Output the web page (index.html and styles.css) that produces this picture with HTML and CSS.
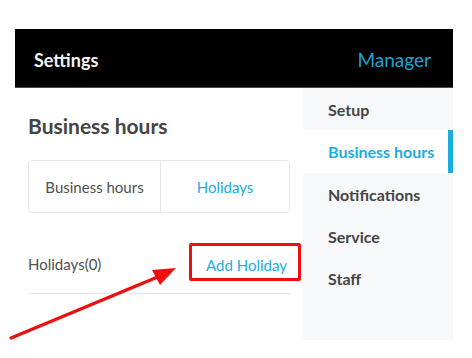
FILE: index.html
```html
<!DOCTYPE html>
<html>
<head>
<meta charset="utf-8">
<link rel="stylesheet" href="styles.css">
</head>
<body>
<div class="page">
  <header class="topbar">
    <span class="title">Settings</span>
    <span class="role">Manager</span>
  </header>
  <div class="body">
    <main class="main">
      <h1 class="heading">Business hours</h1>
      <div class="tabs">
        <div class="tab">Business hours</div>
        <div class="tab active">Holidays</div>
      </div>
      <div class="row">
        <span class="count">Holidays(0)</span>
        <span class="add">Add Holiday</span>
        <span class="highlight"></span>
      </div>
    </main>
    <nav class="sidebar">
      <div class="item">Setup</div>
      <div class="item current">Business hours</div>
      <div class="item">Notifications</div>
      <div class="item">Service</div>
      <div class="item">Staff</div>
    </nav>
  </div>
</div>
<svg class="arrow" width="472" height="358" viewBox="0 0 472 358">
  <line x1="11" y1="338" x2="160" y2="276" stroke="#f00d0d" stroke-width="3.2" stroke-linecap="round"/>
  <polygon points="176,268 152,270 160,285" fill="#f00d0d"/>
</svg>
</body>
</html>
```
FILE: styles.css
```css
* { box-sizing: border-box; }
html, body { margin: 0; padding: 0; background: #fff; }
body {
  font-family: Lato, "Open Sans", "Liberation Sans", sans-serif;
  width: 472px;
  height: 358px;
  overflow: hidden;
  position: relative;
}
.page {
  padding: 29px 19px 0 15px;
}
.topbar {
  height: 59px;
  background: #000;
  border-bottom: 1px solid #4a4a4a;
  display: flex;
  align-items: center;
  justify-content: space-between;
  padding: 3px 22px 0 19px;
}
.title {
  color: #f4f4f4;
  font-size: 18px;
  font-weight: 700;
}
.role {
  color: #1ea4d2;
  font-size: 19px;
}
.body {
  display: flex;
}
.main {
  width: 288px;
  padding-left: 13px;
}
.heading {
  margin: 26px 0 0;
  font-size: 21px;
  line-height: 24px;
  font-weight: 700;
  color: #444;
}
.tabs {
  margin-top: 22px;
  width: 262px;
  height: 53px;
  border: 1px solid #e6e6e6;
  border-radius: 4px;
  display: flex;
}
.tab {
  display: flex;
  align-items: center;
  justify-content: center;
  font-size: 15px;
  color: #4f4f4f;
}
.tab:first-child {
  width: 132px;
  border-right: 1px solid #e6e6e6;
}
.tab.active {
  flex: 1;
  color: #22ade0;
}
.row {
  position: relative;
  margin-top: 21px;
  width: 262px;
  height: 60px;
  border-bottom: 1px solid #e8e8e8;
  display: flex;
  align-items: center;
  justify-content: space-between;
  padding-right: 3px;
}
.count {
  font-size: 15px;
  color: #4f4f4f;
}
.add {
  font-size: 15px;
  color: #22ade0;
  margin-top: 3px;
}
.highlight {
  position: absolute;
  left: 161px;
  top: 9px;
  width: 112px;
  height: 38px;
  border: 3px solid #f00d0d;
  border-radius: 2px;
}
.sidebar {
  width: 150px;
  height: 252px;
  background: #f7f8fa;
}
.item {
  height: 42.3px;
  padding-left: 25px;
  padding-top: 1px;
  display: flex;
  align-items: center;
  font-size: 16px;
  font-weight: 700;
  color: #444;
}
.item.current {
  background: #fff;
  color: #1aade0;
  border-right: 5px solid #1aade0;
}
.arrow {
  position: absolute;
  left: 0;
  top: 0;
  pointer-events: none;
}
```
